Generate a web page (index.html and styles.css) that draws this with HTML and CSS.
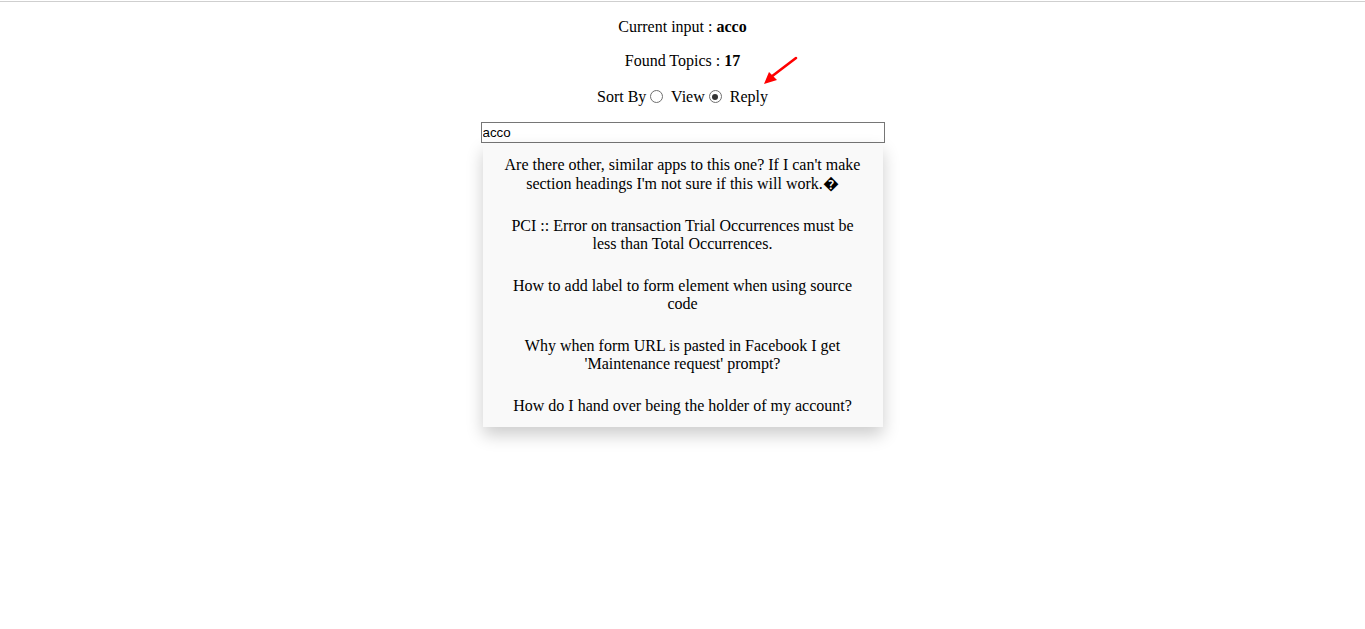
FILE: index.html
```html
<!DOCTYPE html>
<html>
<head>
<meta charset="utf-8">
<link rel="stylesheet" href="styles.css">
</head>
<body>
<div class="topline"></div>
<div class="main">
  <p class="line">Current input : <b>acco</b></p>
  <p class="line">Found Topics : <b>17</b></p>
  <p class="line sort">Sort By<span class="radio"></span> View<span class="radio checked"></span> Reply</p>
  <div class="search">
    <input type="text" class="field" value="acco">
    <div class="dropdown">
      <div class="item first">Are there other, similar apps to this one? If I can't make section headings I'm not sure if this will work.<span class="bad">&#xFFFD;</span></div>
      <div class="item">PCI :: Error on transaction Trial Occurrences must be less than Total Occurrences.</div>
      <div class="item">How to add label to form element when using source code</div>
      <div class="item">Why when form URL is pasted in Facebook I get 'Maintenance request' prompt?</div>
      <div class="item">How do I hand over being the holder of my account?</div>
    </div>
  </div>
</div>
<svg class="arrow" width="40" height="34" viewBox="0 0 40 34">
  <line x1="36" y1="4" x2="11" y2="23" stroke="#ff0000" stroke-width="2.6" stroke-linecap="round"/>
  <polygon points="4,30 9,18 17,26" fill="#ff0000"/>
</svg>
</body>
</html>
```
FILE: styles.css
```css
html, body {
  margin: 0;
  padding: 0;
  background: #fff;
}
body {
  font-family: "Liberation Serif", "Times New Roman", serif;
  font-size: 16px;
  color: #000;
  min-height: 629px;
}
.topline {
  margin-top: 1px;
  height: 1px;
  background: #cfcfcf;
}
.main {
  text-align: center;
  padding-bottom: 60px;
}
.line {
  margin: 16px 0;
}
.sort {
  margin-top: 18px;
}
.radio {
  display: inline-block;
  box-sizing: border-box;
  width: 13px;
  height: 13px;
  margin: 0 4px 0 4px;
  border: 1px solid #6f6f6f;
  border-radius: 50%;
  background: #fff;
  vertical-align: -1px;
  position: relative;
}
.radio.checked::after {
  content: "";
  position: absolute;
  left: 2.5px;
  top: 2.5px;
  width: 6px;
  height: 6px;
  border-radius: 50%;
  background: #333;
}
.search {
  width: 404px;
  margin: 0 auto;
  position: relative;
}
.field {
  display: block;
  box-sizing: border-box;
  width: 404px;
  height: 21px;
  margin: 0;
  padding: 1px 1px;
  border: 1px solid #767676;
  font-family: "Liberation Sans", Arial, sans-serif;
  font-size: 13.33px;
  color: #000;
  background: #fff;
}
.dropdown {
  width: 400px;
  margin: 0 auto;
  background: #f9f9f9;
  box-shadow: 0 8px 16px rgba(0, 0, 0, 0.2);
}
.item {
  padding: 12px 20px;
  text-align: center;
  line-height: 18px;
}
.item.first {
  line-height: 19px;
}
.bad {
  line-height: 1;
}
.arrow {
  position: absolute;
  left: 760px;
  top: 54px;
}
```
